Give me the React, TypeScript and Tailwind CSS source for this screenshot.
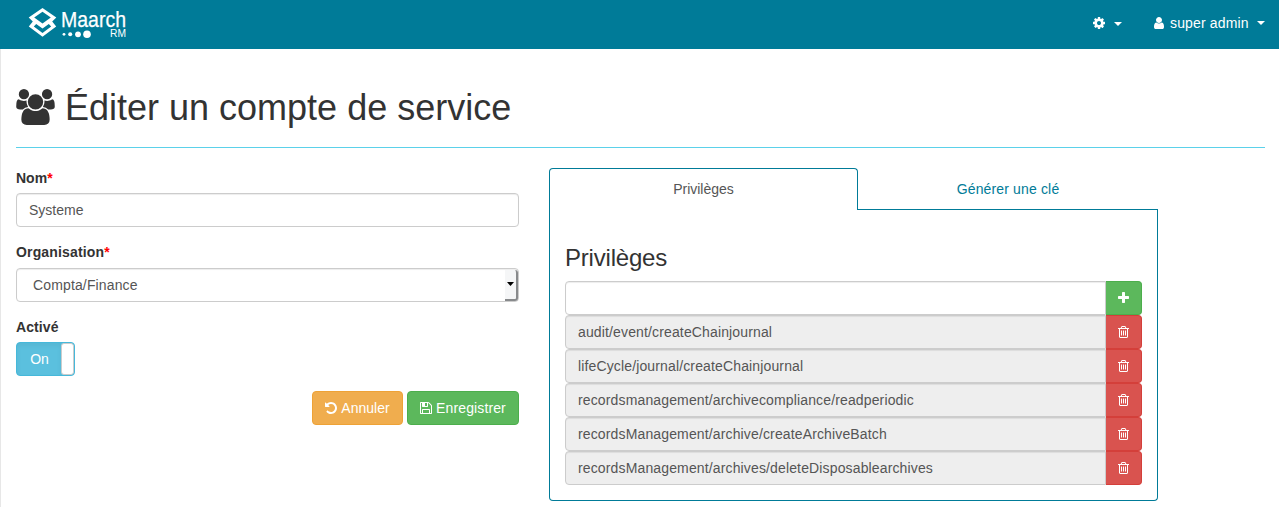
import React from "react";

const icons = {
  cog: "M1152 896q0-106-75-181t-181-75-181 75-75 181 75 181 181 75 181-75 75-181zm512-109v222q0 12-8 23t-20 13l-185 28q-19 54-39 91 35 50 107 138 10 12 10 25t-9 23q-27 37-99 108t-94 71q-12 0-26-9l-138-108q-44 23-91 38-16 136-29 186-7 28-36 28h-222q-14 0-24.5-8.5t-11.5-21.5l-28-184q-49-16-90-37l-141 107q-10 9-25 9-14 0-25-11-126-114-165-168-7-10-7-23 0-12 8-23 15-21 51-66.5t54-70.5q-27-50-41-99l-183-27q-13-2-21-12.5t-8-23.5v-222q0-12 8-23t19-13l186-28q14-46 39-92-40-57-107-138-10-12-10-24 0-10 9-23 26-36 98.5-107.5t94.5-71.5q13 0 26 10l138 107q44-23 91-38 16-136 29-186 7-28 36-28h222q14 0 24.5 8.5t11.5 21.5l28 184q49 16 90 37l142-107q9-9 24-9 13 0 25 10 129 119 165 170 7 8 7 22 0 12-8 23-15 21-51 66.5t-54 70.5q26 50 41 98l183 28q13 2 21 12.5t8 23.5z",
  user: "M1536 1399q0 109-62.5 187t-150.5 78h-854q-88 0-150.5-78t-62.5-187q0-85 8.5-160.5t31.5-152 58.5-131 94-89 134.5-34.5q131 128 313 128t313-128q76 0 134.5 34.5t94 89 58.5 131 31.5 152 8.5 160.5zm-256-887q0 159-112.5 271.5t-271.5 112.5-271.5-112.5-112.5-271.5 112.5-271.5 271.5-112.5 271.5 112.5 112.5 271.5z",
  plus: "M1600 736v192q0 40-28 68t-68 28h-416v416q0 40-28 68t-68 28h-192q-40 0-68-28t-28-68v-416h-416q-40 0-68-28t-28-68v-192q0-40 28-68t68-28h416v-416q0-40 28-68t68-28h192q40 0 68 28t28 68v416h416q40 0 68 28t28 68z",
  trash: "M704 736v576q0 14-9 23t-23 9h-64q-14 0-23-9t-9-23v-576q0-14 9-23t23-9h64q14 0 23 9t9 23zm256 0v576q0 14-9 23t-23 9h-64q-14 0-23-9t-9-23v-576q0-14 9-23t23-9h64q14 0 23 9t9 23zm256 0v576q0 14-9 23t-23 9h-64q-14 0-23-9t-9-23v-576q0-14 9-23t23-9h64q14 0 23 9t9 23zm128 724v-948h-896v948q0 22 7 40.5t14.5 27 10.5 8.5h832q3 0 10.5-8.5t14.5-27 7-40.5zm-672-1076h448l-48-117q-7-9-17-11h-317q-10 2-17 11zm928 32v64q0 14-9 23t-23 9h-96v948q0 83-47 143.5t-113 60.5h-832q-66 0-113-58.5t-47-141.5v-952h-96q-14 0-23-9t-9-23v-64q0-14 9-23t23-9h309l70-167q15-37 54-63t79-26h320q40 0 79 26t54 63l70 167h309q14 0 23 9t9 23z",
  undo: "M1664 896q0 156-61 298t-164 245-245 164-298 61q-172 0-327-72.5t-264-204.5q-7-10-6.5-22.5t8.5-20.5l137-138q10-9 25-9 16 2 23 12 73 95 179 147t225 52q104 0 198.5-40.5t163.5-109.5 109.5-163.5 40.5-198.5-40.5-198.5-109.5-163.5-163.5-109.5-198.5-40.5q-98 0-188 35.5t-160 101.5l137 138q31 30 14 69-17 40-59 40h-448q-26 0-45-19t-19-45v-448q0-42 40-59 39-17 69 14l130 129q107-101 244.5-156.5t284.5-55.5q156 0 298 61t245 164 164 245 61 298z",
  save: "M512 1536h768v-384h-768v384zm896 0h128v-896q0-14-10-38.5t-20-34.5l-281-281q-10-10-34-20t-39-10v416q0 40-28 68t-68 28h-576q-40 0-68-28t-28-68v-416h-128v1280h128v-416q0-40 28-68t68-28h832q40 0 68 28t28 68v416zm-384-928v-320q0-13-9.5-22.5t-22.5-9.5h-192q-13 0-22.5 9.5t-9.5 22.5v320q0 13 9.5 22.5t22.5 9.5h192q13 0 22.5-9.5t9.5-22.5zm640 32v928q0 40-28 68t-68 28h-1344q-40 0-68-28t-28-68v-1344q0-40 28-68t68-28h928q40 0 88 20t76 48l280 280q28 28 48 76t20 88z",
};

function Icon({ name }: { name: keyof typeof icons }) {
  return (
    <svg viewBox="128 0 1536 1792" className="h-[14px] w-[12px] shrink-0 fill-current">
      <path d={icons[name]} />
    </svg>
  );
}

function NarrowIcon({ name }: { name: "plus" | "trash" }) {
  return (
    <svg viewBox="192 0 1408 1792" className="h-[14px] w-[11px] shrink-0 fill-current">
      <path d={icons[name]} />
    </svg>
  );
}

function Users() {
  return (
    <svg viewBox="0 0 1920 1792" className="mt-px h-[36px] w-[39px] shrink-0 fill-current">
      <path d="M593 896q-162 5-265 128h-134q-82 0-138-40.5t-56-118.5q0-353 124-353 6 0 43.5 21t97.5 42.5 119 21.5q67 0 133-23-5 37-5 66 0 139 81 256zm1071 637q0 120-73 189.5t-194 69.5h-874q-121 0-194-69.5t-73-189.5q0-53 3.5-103.5t14-109 26.5-108.5 43-97.5 62-81 85.5-53.5 111.5-20q10 0 43 21.5t73 48 107 48 135 21.5 135-21.5 107-48 73-48 43-21.5q61 0 111.5 20t85.5 53.5 62 81 43 97.5 26.5 108.5 14 109 3.5 103.5zm-1024-1277q0 106-75 181t-181 75-181-75-75-181 75-181 181-75 181 75 75 181zm704 384q0 159-112.5 271.5t-271.5 112.5-271.5-112.5-112.5-271.5 112.5-271.5 271.5-112.5 271.5 112.5 112.5 271.5zm576 225q0 78-56 118.5t-138 40.5h-134q-103-123-265-128 81-117 81-256 0-29-5-66 66 23 133 23 59 0 119-21.5t97.5-42.5 43.5-21q124 0 124 353zm-128-609q0 106-75 181t-181 75-181-75-75-181 75-181 181-75 181 75 75 181z" />
    </svg>
  );
}

function Caret() {
  return (
    <svg viewBox="0 0 8 4" className="h-1 w-2 shrink-0 fill-current">
      <path d="M0 0h8L4 4z" />
    </svg>
  );
}

function Logo() {
  return (
    <svg viewBox="0 0 104 34" className="h-[34px] w-[104px] overflow-visible fill-white">
      <path
        fillRule="evenodd"
        d="M14.5 0L28.3 9.5 24.2 13.6 28.2 18.4 14.5 28.7 .8 18.4 4.8 13.6 .7 9.5ZM14.5 3.8L6.2 9.5 14.5 15.6 22.8 9.5ZM8.2 16L5.8 18.6 14.5 25 23.2 18.6 20.8 16 14.5 20.6Z"
      />
      <circle cx="36" cy="26.3" r="1.4" />
      <circle cx="42.2" cy="26.3" r="2" />
      <circle cx="50" cy="26.3" r="2.9" />
      <circle cx="59" cy="26.3" r="3.8" />
      <text x="33" y="19" fontSize="22.5" textLength="65" lengthAdjust="spacingAndGlyphs" stroke="white" strokeWidth="0.25" fontFamily="Liberation Sans, sans-serif">Maarch</text>
      <text x="82" y="29.3" fontSize="10.5" textLength="16" lengthAdjust="spacingAndGlyphs" fontFamily="Liberation Sans, sans-serif">RM</text>
    </svg>
  );
}

const privileges = [
  "audit/event/createChainjournal",
  "lifeCycle/journal/createChainjournal",
  "recordsmanagement/archivecompliance/readperiodic",
  "recordsManagement/archive/createArchiveBatch",
  "recordsManagement/archives/deleteDisposablearchives",
];

const field =
  "h-[34px] rounded border border-[#ccc] px-3 text-[#555] flex items-center shadow-[inset_0_1px_1px_rgba(0,0,0,0.075)]";

export default function App() {
  return (
    <div className="h-[507px] overflow-hidden bg-white font-['Liberation_Sans',Arial,sans-serif] text-[14px] leading-5 text-[#333]">
      <header className="flex h-[49px] items-start justify-between bg-[#007b98] pr-[14px] pl-7 text-white">
        <div className="pt-2">
          <Logo />
        </div>
        <nav className="flex h-[46px] items-center">
          <Icon name="cog" />
          <span className="ml-[9px] pt-0.5"><Caret /></span>
          <span className="ml-[31px] flex items-center">
            <Icon name="user" />
            <span className="ml-[5px] w-[79px] tracking-[0.16px] whitespace-nowrap">super admin</span>
            <span className="ml-2"><Caret /></span>
          </span>
        </nav>
      </header>

      <main className="h-[458px] border-l border-[#e7e7e7] pr-[14px] pl-[15px]">
        <h1 className="flex h-[99px] items-start border-b border-[#5bd1ea] pt-[39px] text-[36px] leading-10">
          <Users />
          <span className="ml-[10px]">Éditer un compte de service</span>
        </h1>

        <div className="flex pt-5">
          <form className="w-[503px]">
            <label className="block h-[25px] font-bold">Nom<span className="text-[#f00]">*</span></label>
            <div className={field}>Systeme</div>
            <label className="mt-[15px] block h-[26px] font-bold tracking-[0.15px]">Organisation<span className="text-[#f00]">*</span></label>
            <div className={`${field} justify-between pr-0 pl-4`}>
              <span className="tracking-[0.14px]">Compta/Finance</span>
              <span className="flex h-[31px] w-[13px] items-center justify-center rounded-r-[3px] border-r-2 border-b-2 border-[#888a8c] bg-[#f5f6f7] text-black">
                <svg viewBox="0 0 7 4" className="h-1 w-[7px] shrink-0 fill-current"><path d="M0 0h7L3.5 4z" /></svg>
              </span>
            </div>
            <label className="mt-[15px] block h-[25px] font-bold tracking-[0.1px]">Activé</label>
            <div className="flex h-[34px] w-[59px] overflow-hidden rounded border border-[#46b8da] bg-[#5bc0de]">
              <span className="flex w-11 items-center justify-center pl-px text-white shadow-[inset_0_3px_5px_rgba(0,0,0,0.05)]">On</span>
              <span className="flex-1 rounded-[3px] border border-[#ccc] bg-white" />
            </div>
            <div className="mt-[15px] flex justify-end gap-1 text-white">
              <button type="button" className="flex h-[34px] w-[91px] items-center justify-center gap-1 rounded border border-[#eea236] bg-[#f0ad4e]">
                <Icon name="undo" />Annuler
              </button>
              <button type="button" className="flex h-[34px] w-[112px] items-center justify-center gap-1 rounded border border-[#4cae4c] bg-[#5cb85c] tracking-[0.12px]">
                <Icon name="save" />Enregistrer
              </button>
            </div>
          </form>

          <section className="ml-[30px] w-[609px]">
            <div className="flex h-[42px] text-center">
              <div className="w-[309px] rounded-t border border-b-0 border-[#007b98] pt-[10px] text-[#555]">Privilèges</div>
              <div className="flex-1 border-b border-[#007b98] pt-[11px] tracking-[0.15px] text-[#007b98]">Générer une clé</div>
            </div>
            <div className="h-[291px] rounded-b border border-t-0 border-[#007b98] px-[15px] pt-[33px]">
              <h2 className="h-[38px] text-[24px] leading-[30px] tracking-[-0.2px]">Privilèges</h2>
              <div className="flex">
                <div className={`${field} flex-1 rounded-r-none`} />
                <button type="button" className="flex h-[34px] w-9 items-center justify-center rounded-r border border-l-0 border-[#4cae4c] bg-[#5cb85c] text-white">
                  <NarrowIcon name="plus" />
                </button>
              </div>
              {privileges.map((name) => (
                <div key={name} className="flex">
                  <div className={`${field} flex-1 rounded-r-none bg-[#eee] tracking-[0.14px]`}>{name}</div>
                  <button type="button" className="flex h-[34px] w-9 items-center justify-center rounded-r border border-l-0 border-[#d43f3a] bg-[#d9534f] text-white">
                    <NarrowIcon name="trash" />
                  </button>
                </div>
              ))}
            </div>
          </section>
        </div>
      </main>
    </div>
  );
}
